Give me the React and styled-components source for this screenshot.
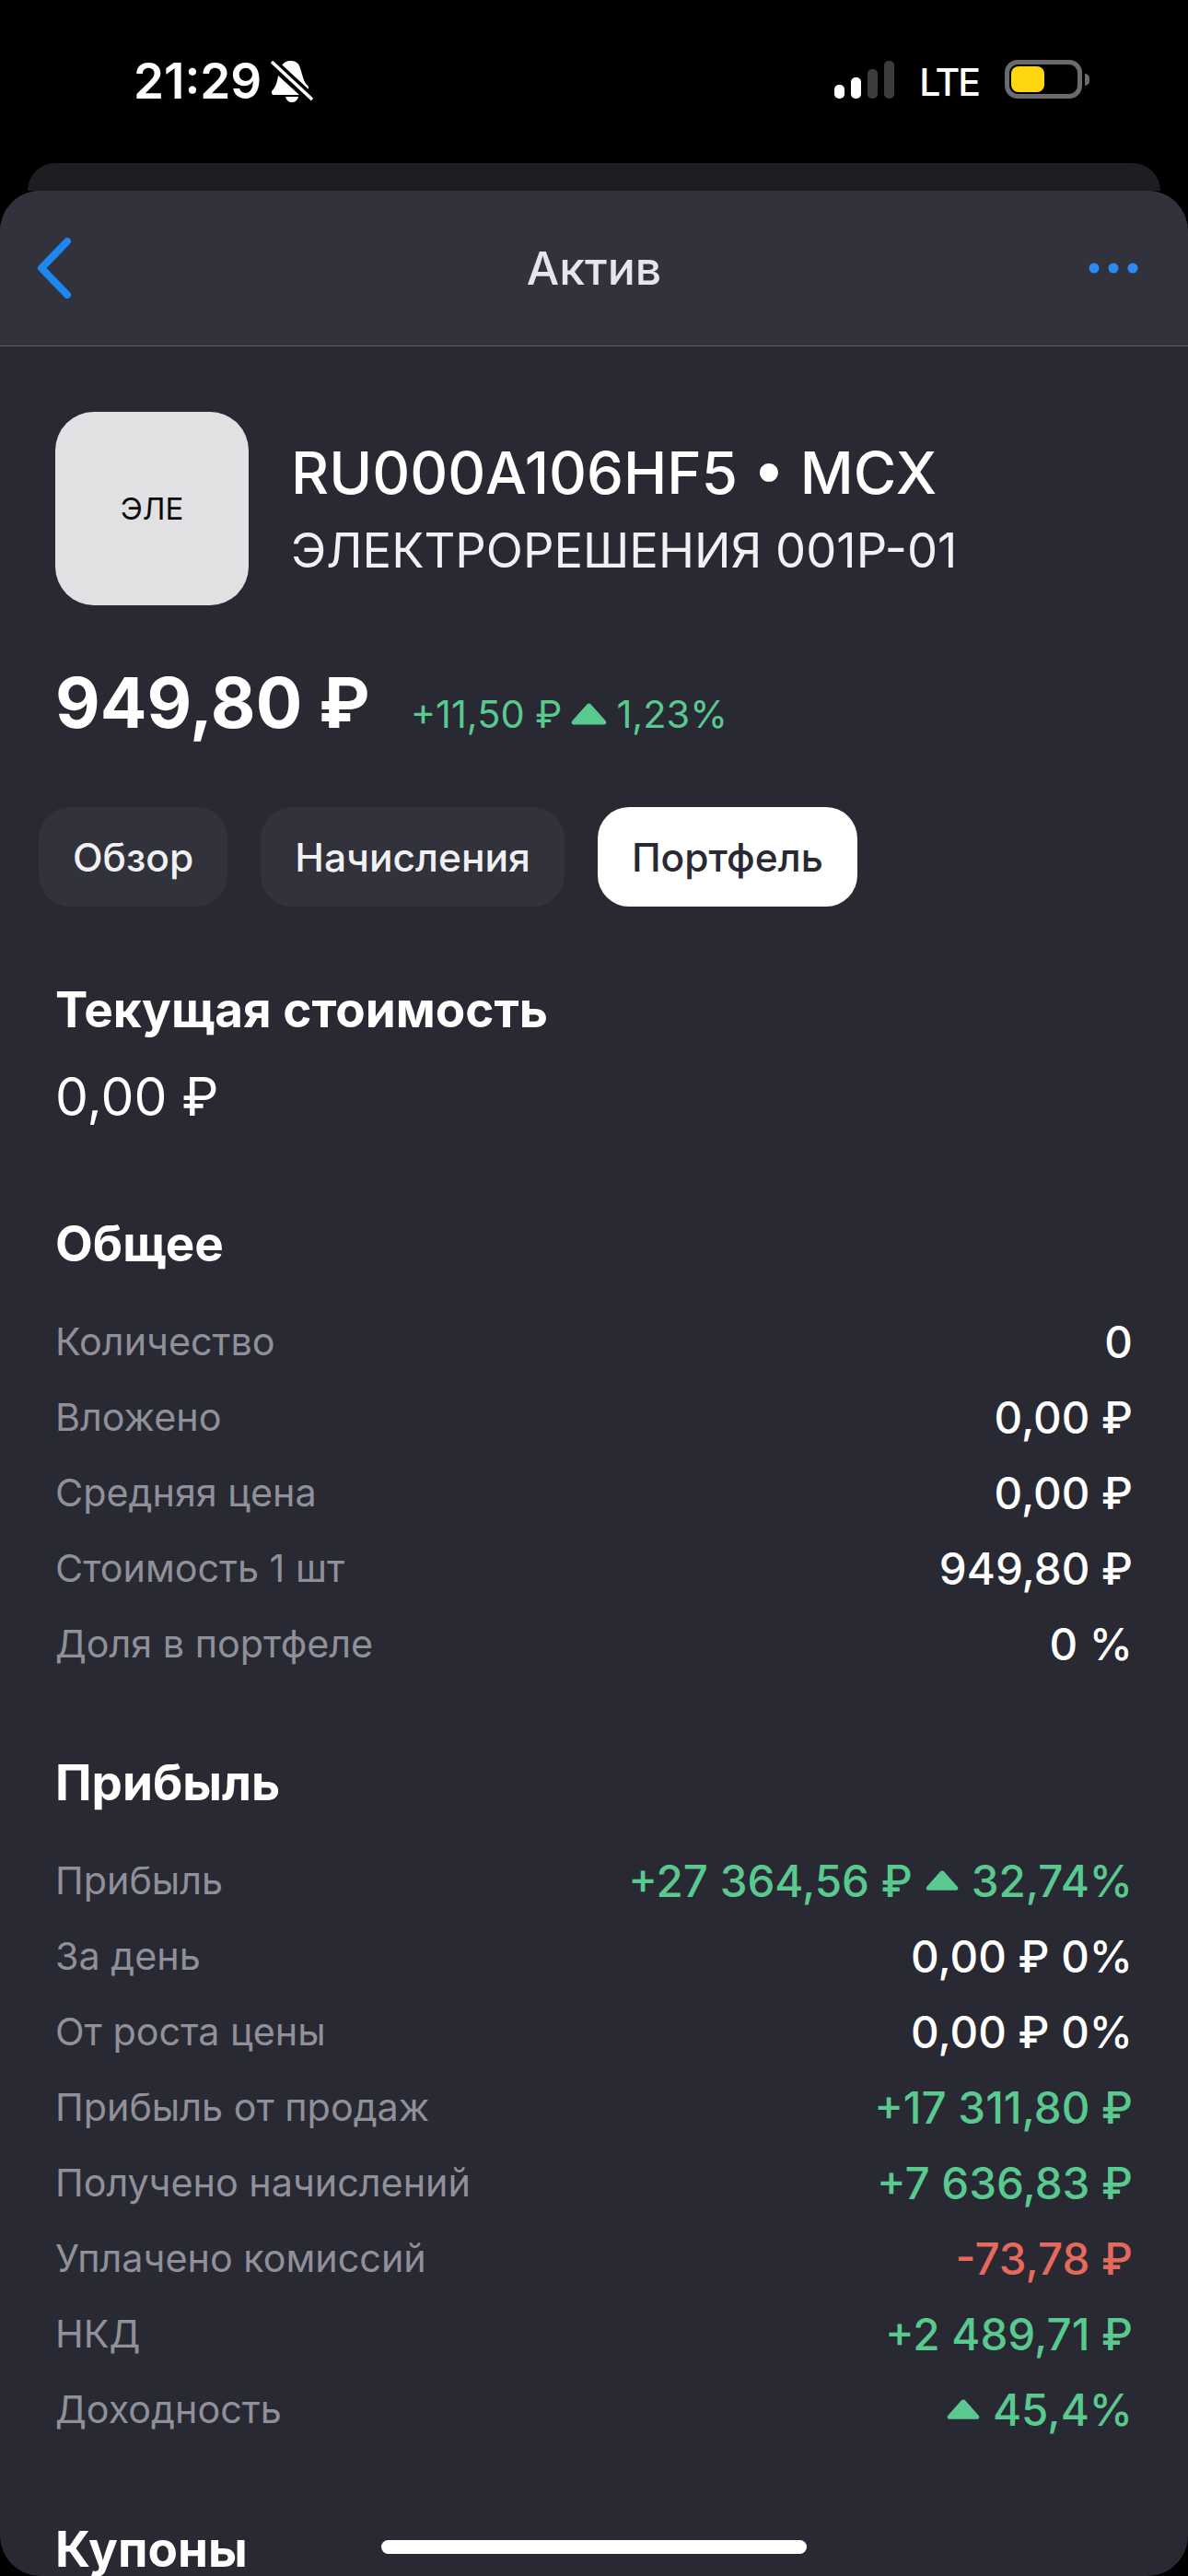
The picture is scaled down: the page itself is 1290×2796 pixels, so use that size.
import React from "react";
import styled, { createGlobalStyle } from "styled-components";

const GlobalStyle = createGlobalStyle`
  html, body {
    margin: 0;
    padding: 0;
    background: #000;
    font-family: Inter, "Noto Sans", sans-serif;
  }
`;

const Screen = styled.div`
  position: relative;
  width: 1290px;
  height: 2796px;
  overflow: hidden;
  background: #000;
  display: flex;
  flex-direction: column;
`;

const StatusBar = styled.div`
  height: 177px;
  flex: none;
  box-sizing: border-box;
  padding: 60px 115px 0 145px;
  display: flex;
  justify-content: space-between;
  align-items: flex-start;
  color: #fff;
`;

const StatusLeft = styled.div`
  display: flex;
  align-items: center;
  gap: 10px;
`;

const Time = styled.span`
  font-size: 53px;
  line-height: 56px;
  font-weight: 600;
`;

const StatusRight = styled.div`
  display: flex;
  align-items: flex-end;
  height: 50px;
`;

const Signal = styled.div`
  display: flex;
  align-items: flex-end;
  gap: 6.5px;
  margin-bottom: 3px;
`;

const SignalBar = styled.div`
  width: 11.5px;
  height: ${({ h }) => h}px;
  border-radius: 5px;
  background: ${({ on }) => (on ? "#fff" : "#3c3c3c")};
`;

const Lte = styled.span`
  font-size: 41px;
  line-height: 44px;
  font-weight: 500;
  letter-spacing: -2px;
  margin-left: 27px;
  margin-bottom: -1px;
`;

const Battery = styled.div`
  position: relative;
  width: 84px;
  height: 42px;
  box-sizing: border-box;
  margin-left: 28px;
  margin-bottom: 3px;
  border: 5px solid #6b6b6b;
  border-radius: 14px;
  padding: 2px;
  &::after {
    content: "";
    position: absolute;
    right: -13px;
    top: 10px;
    width: 5px;
    height: 13px;
    border-radius: 0 6px 6px 0;
    background: #6b6b6b;
  }
`;

const BatteryFill = styled.div`
  width: 36px;
  height: 100%;
  border-radius: 8px;
  background: #ffd60f;
`;

const BackSheet = styled.div`
  height: 30px;
  flex: none;
  margin: 0 30px;
  background: #1d1d22;
  border-radius: 34px 34px 0 0;
`;

const Sheet = styled.div`
  flex: 1;
  min-height: 0;
  overflow: hidden;
  background: #282932;
  border-radius: 44px;
  color: #fff;
`;

const Header = styled.div`
  height: 169px;
  box-sizing: border-box;
  padding: 0 54px;
  background: #31323c;
  border-bottom: 1px solid #5b5c66;
  display: grid;
  grid-template-columns: 1fr auto 1fr;
  align-items: center;
`;

const HeaderSide = styled.div`
  display: flex;
  justify-content: ${({ end }) => (end ? "flex-end" : "flex-start")};
`;

const BackButton = styled.div`
  display: flex;
  margin-left: -14px;
`;

const HeaderTitle = styled.span`
  font-size: 50px;
  font-weight: 500;
  color: #e6e6ea;
`;

const Content = styled.div`
  padding: 71px 60px 0;
`;

const AssetRow = styled.div`
  display: flex;
  gap: 46px;
  align-items: flex-start;
`;

const Logo = styled.div`
  width: 210px;
  height: 210px;
  flex: none;
  border-radius: 42px;
  background: #e1e1e4;
  color: #0b0b0d;
  font-size: 33px;
  display: flex;
  align-items: center;
  justify-content: center;
`;

const AssetText = styled.div`
  padding-top: 28px;
`;

const Ticker = styled.div`
  font-size: 63.5px;
  line-height: 75px;
  font-weight: 500;
`;

const AssetName = styled.div`
  font-size: 52.5px;
  line-height: 60px;
  font-weight: 400;
  color: #f1f1f3;
  margin-top: 17px;
`;

const PriceRow = styled.div`
  display: flex;
  align-items: baseline;
  margin-top: 58px;
`;

const Price = styled.span`
  font-size: 75px;
  line-height: 96px;
  font-weight: 700;
`;

const Delta = styled.span`
  display: inline-flex;
  align-items: center;
  gap: 10px;
  margin-left: 44px;
  font-size: 41.5px;
  color: #5ac990;
`;

const Tabs = styled.div`
  display: flex;
  gap: 36px;
  margin: 65px 0 0 -18px;
`;

const Tab = styled.div`
  height: 108px;
  padding: 0 37px;
  box-sizing: border-box;
  border-radius: 34px;
  display: flex;
  align-items: center;
  font-size: 42.5px;
  font-weight: 500;
  background: ${({ active }) => (active ? "#fff" : "#31323c")};
  color: ${({ active }) => (active ? "#282932" : "#f1f1f3")};
`;

const SectionTitle = styled.div`
  font-size: 53px;
  line-height: 60px;
  font-weight: 700;
  margin-top: ${({ top }) => top}px;
`;

const CurrentValue = styled.div`
  font-size: 57px;
  line-height: 70px;
  font-weight: 400;
  margin-top: 30px;
`;

const Rows = styled.div`
  margin-top: 35px;
`;

const Row = styled.div`
  height: 82px;
  display: flex;
  align-items: center;
  justify-content: space-between;
`;

const Label = styled.span`
  font-size: 41.3px;
  color: #8f9099;
`;

const Value = styled.span`
  display: inline-flex;
  align-items: center;
  gap: 14px;
  font-size: 47.5px;
  font-weight: 500;
  color: ${({ tone }) =>
    tone === "up" ? "#5ac990" : tone === "down" ? "#e5695c" : "#fff"};
`;

const HomeIndicator = styled.div`
  position: absolute;
  left: 414px;
  bottom: 24px;
  width: 462px;
  height: 15px;
  border-radius: 8px;
  background: #fff;
`;

const MutedBell = () => (
  <svg width="46" height="46" viewBox="0 0 46 46" fill="#fff">
    <path d="M22 1c5 0 9 3 10 8l3 10c1 4 3 7 6 10v3L12 6c2-3 5-5 10-5z" />
    <path d="M8 17l23 21H3c-1 0-2-1-2-2v-2c4-4 6-9 7-17z" />
    <path d="M16 40h14c-1 4-4 6-7 6s-6-2-7-6z" />
    <path d="M2 2L45 42" stroke="#000" strokeWidth="9" />
    <path d="M1 2L45 43" stroke="#fff" strokeWidth="3.5" />
  </svg>
);

const BackIcon = () => (
  <svg width="38" height="66" viewBox="0 0 38 66" fill="none">
    <path
      d="M33 4L5 33l28 29"
      stroke="#1e86f0"
      strokeWidth="8"
      strokeLinecap="round"
      strokeLinejoin="round"
    />
  </svg>
);

const MoreIcon = () => (
  <svg width="54" height="12" viewBox="0 0 54 12" fill="#2b8bf2">
    <circle cx="6" cy="6" r="5.5" />
    <circle cx="27" cy="6" r="5.5" />
    <circle cx="48" cy="6" r="5.5" />
  </svg>
);

const UpArrow = ({ size = 36 }) => (
  <svg width={size} height={size * 0.62} viewBox="0 0 36 22" fill="currentColor">
    <path d="M15.8 1.4c1.2-1.4 3.2-1.4 4.4 0l14.6 16.4c1.2 1.5.3 3.7-1.7 3.7H2.9c-2 0-2.9-2.2-1.7-3.7z" />
  </svg>
);

const generalRows = [
  ["Количество", "0"],
  ["Вложено", "0,00 ₽"],
  ["Средняя цена", "0,00 ₽"],
  ["Стоимость 1 шт", "949,80 ₽"],
  ["Доля в портфеле", "0 %"],
];

const profitRows = [
  ["Прибыль", <>+27 364,56 ₽ <UpArrow /> 32,74%</>, "up"],
  ["За день", "0,00 ₽ 0%"],
  ["От роста цены", "0,00 ₽ 0%"],
  ["Прибыль от продаж", "+17 311,80 ₽", "up"],
  ["Получено начислений", "+7 636,83 ₽", "up"],
  ["Уплачено комиссий", "-73,78 ₽", "down"],
  ["НКД", "+2 489,71 ₽", "up"],
  ["Доходность", <><UpArrow /> 45,4%</>, "up"],
];

export default function App() {
  return (
    <>
      <GlobalStyle />
      <Screen>
        <StatusBar>
          <StatusLeft>
            <Time>21:29</Time>
            <MutedBell />
          </StatusLeft>
          <StatusRight>
            <Signal>
              <SignalBar h={15} on />
              <SignalBar h={23} on />
              <SignalBar h={32} />
              <SignalBar h={41} />
            </Signal>
            <Lte>LTE</Lte>
            <Battery>
              <BatteryFill />
            </Battery>
          </StatusRight>
        </StatusBar>
        <BackSheet />
        <Sheet>
          <Header>
            <HeaderSide>
              <BackButton>
                <BackIcon />
              </BackButton>
            </HeaderSide>
            <HeaderTitle>Актив</HeaderTitle>
            <HeaderSide end>
              <MoreIcon />
            </HeaderSide>
          </Header>
          <Content>
            <AssetRow>
              <Logo>ЭЛЕ</Logo>
              <AssetText>
                <Ticker>RU000A106HF5 • MCX</Ticker>
                <AssetName>ЭЛЕКТРОРЕШЕНИЯ 001P-01</AssetName>
              </AssetText>
            </AssetRow>
            <PriceRow>
              <Price>949,80 ₽</Price>
              <Delta>
                +11,50 ₽ <UpArrow size={39} /> 1,23%
              </Delta>
            </PriceRow>
            <Tabs>
              <Tab>Обзор</Tab>
              <Tab>Начисления</Tab>
              <Tab active>Портфель</Tab>
            </Tabs>
            <SectionTitle top={82}>Текущая стоимость</SectionTitle>
            <CurrentValue>0,00 ₽</CurrentValue>
            <SectionTitle top={94}>Общее</SectionTitle>
            <Rows>
              {generalRows.map(([label, value]) => (
                <Row key={label}>
                  <Label>{label}</Label>
                  <Value>{value}</Value>
                </Row>
              ))}
            </Rows>
            <SectionTitle top={80}>Прибыль</SectionTitle>
            <Rows>
              {profitRows.map(([label, value, tone]) => (
                <Row key={label}>
                  <Label>{label}</Label>
                  <Value tone={tone}>{value}</Value>
                </Row>
              ))}
            </Rows>
            <SectionTitle top={81}>Купоны</SectionTitle>
          </Content>
        </Sheet>
        <HomeIndicator />
      </Screen>
    </>
  );
}
